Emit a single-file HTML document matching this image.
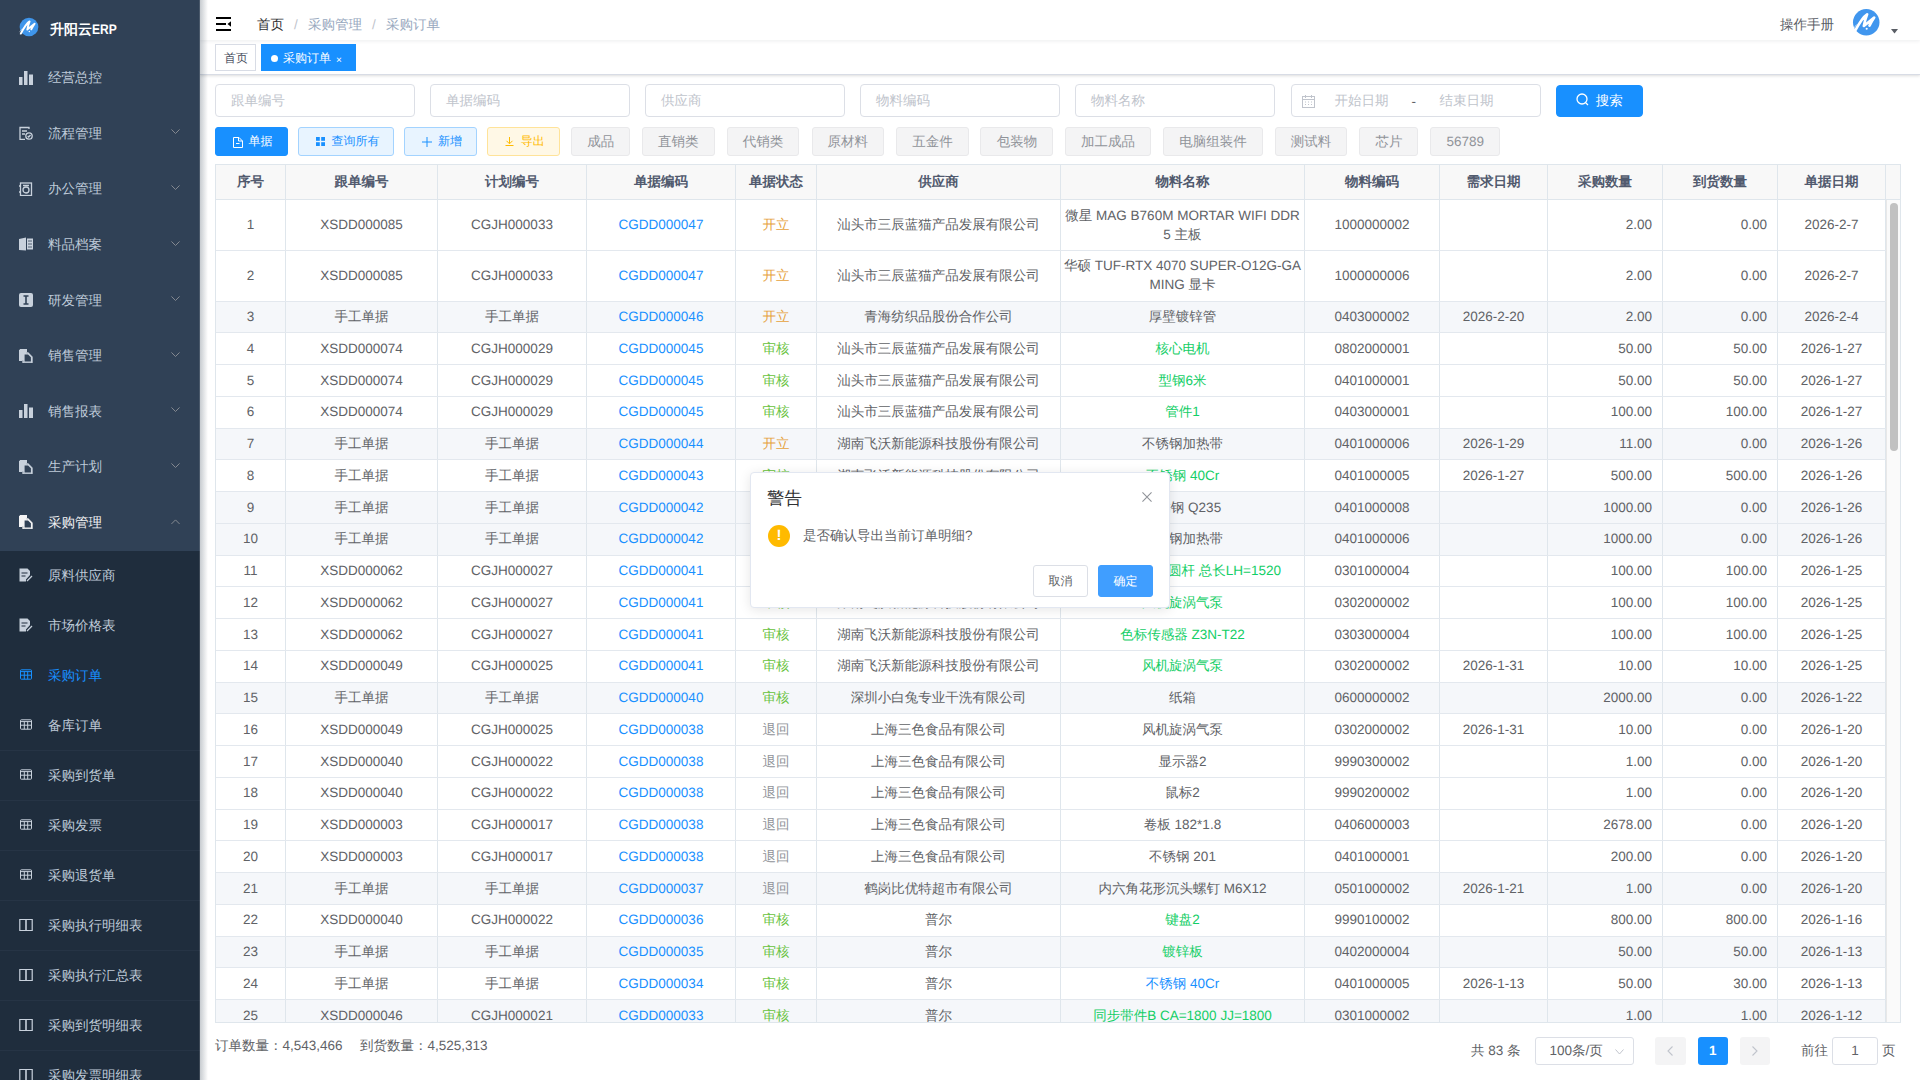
<!DOCTYPE html>
<html><head><meta charset="utf-8">
<style>
*{box-sizing:border-box;margin:0;padding:0}
html,body{width:1920px;height:1080px;overflow:hidden;background:#fff;font-family:"Liberation Sans",sans-serif;-webkit-font-smoothing:antialiased;text-rendering:geometricPrecision}
#side{position:absolute;left:0;top:0;width:200px;height:1080px;background:#304156;overflow:hidden;z-index:5}
#side .logo{position:absolute;left:19.25px;top:17.35px;width:20px;height:20px}
#side .brand{position:absolute;left:50px;top:19px;line-height:20px;font-size:14px;font-weight:bold;color:#fff;white-space:nowrap}
.mi{position:absolute;left:0;width:200px;height:55.6px;font-size:13.5px}
.mi .ic{position:absolute;left:19px;top:50%;margin-top:-7.2px;width:14px;height:14px}
.mi .ic svg,.si .ic svg{display:block}
.mi .mt,.si .mt{position:absolute;left:48px;top:50%;margin-top:-9.5px;line-height:20px;white-space:nowrap}
.mi .arr{position:absolute;left:170.5px;top:50%;margin-top:-4px;width:9px;height:5.4px}
#subm{position:absolute;left:0;top:551px;width:200px;height:560px;background:#1f2d3d}
.si{position:absolute;left:0;width:200px;height:50px;font-size:13.5px}
.si .ic{position:absolute;left:19px;top:50%;margin-top:-8.5px;width:14px;height:14px}
.si .mt{margin-top:-10.4px !important}
.si.ln{box-shadow:0 -1px 0 #263445}
#sideshadow{position:absolute;left:200px;top:0;width:8px;height:1080px;background:linear-gradient(to right,rgba(0,21,41,.22),rgba(0,21,41,0));z-index:4}

#nav{position:absolute;left:200px;top:0;width:1720px;height:40px;background:#fff;box-shadow:0 1px 4px rgba(0,21,41,.08);z-index:3}
#ham{position:absolute;left:16px;top:17px}
.bc{position:absolute;top:15px;line-height:20px;font-size:13.5px;white-space:nowrap}
#tags{position:absolute;left:200px;top:40px;width:1720px;height:35px;background:#fff;border-bottom:1px solid #d8dce5;box-shadow:0 1px 3px 0 rgba(0,0,0,.12),0 0 3px 0 rgba(0,0,0,.04);z-index:2}
.tag{position:absolute;top:4px;height:26.6px;line-height:26.5px;font-size:12px;border:1px solid #d8dce5;color:#495060;padding:0 8px;white-space:nowrap}
.tag.act{background:#1890ff;border-color:#1890ff;color:#fff}

.inp{position:absolute;top:84px;width:200px;height:32.5px;border:1px solid #dcdfe6;border-radius:4px;background:#fff}
.inp span{position:absolute;left:15px;top:0.5px;line-height:30.5px;font-size:13.5px;color:#c0c4cc;white-space:nowrap}
.btn{position:absolute;top:126.5px;height:29px;border-radius:3px;font-size:13.5px;line-height:28.5px;text-align:center;border:1px solid;white-space:nowrap}
.btn .bi{display:inline-block;vertical-align:-1px;margin-right:7px}
.btn .bi svg{display:block}
.b-primary{background:#1890ff;border-color:#1890ff;color:#fff}
.b-plain{background:#e8f4ff;border-color:#a3d3ff;color:#1890ff}
.b-warn{background:#fff8e6;border-color:#ffe399;color:#ffba00}
.b-info{background:#f4f4f5;border-color:#e9e9eb;color:#909399}

#tbl{position:absolute;left:215px;top:164px;width:1686px;height:859px;border:1px solid #dfe6ec;border-right:none;overflow:hidden}
#tbl .hd{position:absolute;left:0;top:0;width:1685px;height:35.2px;background:#f8f8f9;border-bottom:1px solid #dfe6ec;display:flex}
#tbl .hd .c{height:34.2px;line-height:33px;padding-bottom:1.5px;font-weight:bold;color:#515a6e;background:#f8f8f8}
#tbl .hd .gut{border-right:1px solid #dfe6ec;padding:0}
.c{flex:none;border-right:1px solid #dfe6ec;text-align:center;font-size:13.5px;color:#606266;display:flex;align-items:center;justify-content:center;padding:0 10px;line-height:19.1px;white-space:nowrap;overflow:hidden}
.c.r{justify-content:flex-end}
.row{display:flex;border-bottom:1px solid #e3e8ee;background:#fff}
.row .c{padding-bottom:1px}
.row.s{background:#f5f7fa}
#body{position:absolute;left:0;top:35.2px;width:1670px;height:824px;overflow:hidden}
#sb{position:absolute;left:1670px;top:35.2px;width:15px;height:824px;background:#fafafa;border-left:1px solid #e8e8e8;border-right:1px solid #dfe6ec}
#sb .th{position:absolute;left:3px;top:3px;width:8px;height:248px;border-radius:4px;background:#c1c1c1}
.lnk{color:#1890ff}
.st-o{color:#e6a23c}
.st-g{color:#67c23a}
.st-r{color:#909399}
.mg{color:#13ce66}
.mb{color:#1890ff}

.foot{position:absolute;top:1036px;line-height:20px;font-size:13.5px;color:#606266;white-space:nowrap}
.pg{position:absolute;top:1036.5px;height:28px;line-height:28px;font-size:13.5px;color:#606266;white-space:nowrap}
.pbox{position:absolute;top:1036.5px;height:28px;border-radius:3px}

#mb{position:absolute;left:750px;top:472px;width:419.5px;height:136px;background:#fff;border:1px solid #e2e7f1;border-radius:4px;box-shadow:0 2px 12px 0 rgba(0,0,0,.1);z-index:10}
#mb .tt{position:absolute;left:16px;top:13.5px;line-height:22px;font-size:17.5px;color:#303133}
#mb .x{position:absolute;left:390.5px;top:19px}
#mb .wi{position:absolute;left:17px;top:52px;width:22px;height:22px;border-radius:50%;background:#ffba00;color:#fff;text-align:center;font-weight:bold;font-size:15px;line-height:22px}
#mb .msg{position:absolute;left:52px;top:53px;line-height:20px;font-size:13.5px;color:#606266;white-space:nowrap}
#mb .bt{position:absolute;top:92px;width:55px;height:32px;border-radius:3px;font-size:12px;line-height:30px;text-align:center}
</style></head>
<body>
<div id="side">
  <svg class="logo" viewBox="0 0 20 20" overflow="visible"><circle cx="10" cy="10" r="9.35" fill="#3f95ea"/><path d="M1.8 16.6C4 12.5 7.2 6.5 10.6 4.4 9.6 7 8.8 10 8.3 12.6L15.6 6.7C14.2 8.8 13.1 10.8 12.3 12.3" fill="none" stroke="#fff" stroke-width="1.9" stroke-linecap="round" stroke-linejoin="round"/><circle cx="10.3" cy="14.6" r="0.75" fill="#fff"/><path d="M0.4 15.2L3.2 11.6M1.2 17.2L3 15" stroke="#fff" stroke-width="0.6" opacity=".7"/></svg>
  <div class="brand">升阳云<span style="display:inline-block;transform:scaleX(.86);transform-origin:0 50%">ERP</span></div>
  <div class="mi" style="top:50px;color:#bfcbd9"><span class="ic"><svg width="14" height="14" viewBox="0 0 14 14"><rect x="0" y="6" width="3.5" height="8" fill="#c8d1dc"/><rect x="5" y="0" width="3.5" height="14" fill="#c8d1dc"/><rect x="10" y="3.5" width="4" height="10.5" fill="#c8d1dc"/></svg></span><span class="mt">经营总控</span></div>
<div class="mi" style="top:105.6px;color:#bfcbd9"><span class="ic"><svg width="14" height="14" viewBox="0 0 14 14" fill="none" stroke="#c8d1dc" stroke-width="1.3"><path d="M10 3V1.5H1v12h5"/><path d="M3 5h5M3 8h3"/><circle cx="10" cy="10" r="3.2"/><path d="M8.7 10l1 1 1.8-2"/></svg></span><span class="mt">流程管理</span><svg class="arr" width="10" height="6" viewBox="0 0 10 6" fill="none" stroke="#909399" stroke-width="1"><path d="M0.5 0.5L5 5l4.5-4.5"/></svg></div>
<div class="mi" style="top:161.2px;color:#bfcbd9"><span class="ic"><svg width="14" height="14" viewBox="0 0 14 14" fill="none" stroke="#c8d1dc" stroke-width="1.3"><rect x="1.5" y="1" width="11" height="12.5"/><circle cx="7" cy="8" r="3"/><path d="M0 4h2M0 10h2M4 3.5h6"/></svg></span><span class="mt">办公管理</span><svg class="arr" width="10" height="6" viewBox="0 0 10 6" fill="none" stroke="#909399" stroke-width="1"><path d="M0.5 0.5L5 5l4.5-4.5"/></svg></div>
<div class="mi" style="top:216.79999999999998px;color:#bfcbd9"><span class="ic"><svg width="14" height="14" viewBox="0 0 14 14"><path d="M0 2l7-1.5v13L0 13z" fill="#c8d1dc"/><rect x="8" y="1.5" width="6" height="11" fill="#c8d1dc"/><path d="M9 4h4M9 7h4M9 10h4" stroke="#304156" stroke-width="0.8"/></svg></span><span class="mt">料品档案</span><svg class="arr" width="10" height="6" viewBox="0 0 10 6" fill="none" stroke="#909399" stroke-width="1"><path d="M0.5 0.5L5 5l4.5-4.5"/></svg></div>
<div class="mi" style="top:272.4px;color:#bfcbd9"><span class="ic"><svg width="14" height="14" viewBox="0 0 14 14"><rect x="0" y="0" width="14" height="14" rx="2" fill="#c8d1dc"/><path d="M4.5 3h5M4.5 11h5M7 3v8" stroke="#304156" stroke-width="1.6"/></svg></span><span class="mt">研发管理</span><svg class="arr" width="10" height="6" viewBox="0 0 10 6" fill="none" stroke="#909399" stroke-width="1"><path d="M0.5 0.5L5 5l4.5-4.5"/></svg></div>
<div class="mi" style="top:328.0px;color:#bfcbd9"><span class="ic"><svg width="14" height="14" viewBox="0 0 14 14"><path d="M0 1h8v2H3v9H0z" fill="#c8d1dc"/><path d="M4 4h5l4 4v6H4z" fill="none" stroke="#c8d1dc" stroke-width="1.3"/><path d="M1 0h7v1H1z" fill="#c8d1dc"/><rect x="0.5" y="0.5" width="7" height="11" fill="#c8d1dc"/><path d="M5 5h4.5l3 3v5H5z" fill="#304156" stroke="#c8d1dc" stroke-width="1.2"/></svg></span><span class="mt">销售管理</span><svg class="arr" width="10" height="6" viewBox="0 0 10 6" fill="none" stroke="#909399" stroke-width="1"><path d="M0.5 0.5L5 5l4.5-4.5"/></svg></div>
<div class="mi" style="top:383.6px;color:#bfcbd9"><span class="ic"><svg width="14" height="14" viewBox="0 0 14 14"><rect x="0" y="6" width="3.5" height="8" fill="#c8d1dc"/><rect x="5" y="0" width="3.5" height="14" fill="#c8d1dc"/><rect x="10" y="3.5" width="4" height="10.5" fill="#c8d1dc"/></svg></span><span class="mt">销售报表</span><svg class="arr" width="10" height="6" viewBox="0 0 10 6" fill="none" stroke="#909399" stroke-width="1"><path d="M0.5 0.5L5 5l4.5-4.5"/></svg></div>
<div class="mi" style="top:439.20000000000005px;color:#bfcbd9"><span class="ic"><svg width="14" height="14" viewBox="0 0 14 14"><path d="M0 1h8v2H3v9H0z" fill="#c8d1dc"/><path d="M4 4h5l4 4v6H4z" fill="none" stroke="#c8d1dc" stroke-width="1.3"/><path d="M1 0h7v1H1z" fill="#c8d1dc"/><rect x="0.5" y="0.5" width="7" height="11" fill="#c8d1dc"/><path d="M5 5h4.5l3 3v5H5z" fill="#304156" stroke="#c8d1dc" stroke-width="1.2"/></svg></span><span class="mt">生产计划</span><svg class="arr" width="10" height="6" viewBox="0 0 10 6" fill="none" stroke="#909399" stroke-width="1"><path d="M0.5 0.5L5 5l4.5-4.5"/></svg></div>
<div class="mi" style="top:494.80000000000007px;color:#f4f4f5"><span class="ic"><svg width="14" height="14" viewBox="0 0 14 14"><path d="M0 1h8v2H3v9H0z" fill="#f4f4f5"/><path d="M4 4h5l4 4v6H4z" fill="none" stroke="#f4f4f5" stroke-width="1.3"/><path d="M1 0h7v1H1z" fill="#f4f4f5"/><rect x="0.5" y="0.5" width="7" height="11" fill="#f4f4f5"/><path d="M5 5h4.5l3 3v5H5z" fill="#304156" stroke="#f4f4f5" stroke-width="1.2"/></svg></span><span class="mt">采购管理</span><svg class="arr" width="10" height="6" viewBox="0 0 10 6" fill="none" stroke="#909399" stroke-width="1"><path d="M0.5 5.5L5 1l4.5 4.5"/></svg></div>
  <div id="subm"></div>
  <div class="si" style="top:551px;color:#bfcbd9"><span class="ic"><svg width="14" height="14" viewBox="0 0 14 14"><path d="M0.5 0.5h8l2.5 2.5v4l-4 4.5v2H0.5z" fill="#c8d1dc"/><path d="M2.5 5h6M2.5 8h4" stroke="#1f2d3d" stroke-width="1.2"/><path d="M8 13l5-5" stroke="#c8d1dc" stroke-width="1.3"/></svg></span><span class="mt">原料供应商</span></div>
<div class="si" style="top:601px;color:#bfcbd9"><span class="ic"><svg width="14" height="14" viewBox="0 0 14 14"><path d="M0.5 0.5h8l2.5 2.5v4l-4 4.5v2H0.5z" fill="#c8d1dc"/><path d="M2.5 5h6M2.5 8h4" stroke="#1f2d3d" stroke-width="1.2"/><path d="M8 13l5-5" stroke="#c8d1dc" stroke-width="1.3"/></svg></span><span class="mt">市场价格表</span></div>
<div class="si" style="top:651px;color:#1890ff"><span class="ic"><svg width="14" height="14" viewBox="0 0 14 14" fill="none" stroke="#1890ff" stroke-width="1"><rect x="1.5" y="1.8" width="11" height="9.4" rx="0.8"/><path d="M1.5 3.6h11M1.5 7.2h11M5.3 3.6v7.6M8.7 3.6v7.6"/></svg></span><span class="mt">采购订单</span></div>
<div class="si" style="top:701px;color:#bfcbd9"><span class="ic"><svg width="14" height="14" viewBox="0 0 14 14" fill="none" stroke="#c8d1dc" stroke-width="1"><rect x="1.5" y="1.8" width="11" height="9.4" rx="0.8"/><path d="M1.5 3.6h11M1.5 7.2h11M5.3 3.6v7.6M8.7 3.6v7.6"/></svg></span><span class="mt">备库订单</span></div>
<div class="si ln" style="top:751px;color:#bfcbd9"><span class="ic"><svg width="14" height="14" viewBox="0 0 14 14" fill="none" stroke="#c8d1dc" stroke-width="1"><rect x="1.5" y="1.8" width="11" height="9.4" rx="0.8"/><path d="M1.5 3.6h11M1.5 7.2h11M5.3 3.6v7.6M8.7 3.6v7.6"/></svg></span><span class="mt">采购到货单</span></div>
<div class="si ln" style="top:801px;color:#bfcbd9"><span class="ic"><svg width="14" height="14" viewBox="0 0 14 14" fill="none" stroke="#c8d1dc" stroke-width="1"><rect x="1.5" y="1.8" width="11" height="9.4" rx="0.8"/><path d="M1.5 3.6h11M1.5 7.2h11M5.3 3.6v7.6M8.7 3.6v7.6"/></svg></span><span class="mt">采购发票</span></div>
<div class="si ln" style="top:851px;color:#bfcbd9"><span class="ic"><svg width="14" height="14" viewBox="0 0 14 14" fill="none" stroke="#c8d1dc" stroke-width="1"><rect x="1.5" y="1.8" width="11" height="9.4" rx="0.8"/><path d="M1.5 3.6h11M1.5 7.2h11M5.3 3.6v7.6M8.7 3.6v7.6"/></svg></span><span class="mt">采购退货单</span></div>
<div class="si ln" style="top:901px;color:#bfcbd9"><span class="ic"><svg width="14" height="14" viewBox="0 0 14 14" fill="none" stroke="#c8d1dc" stroke-width="1.2"><path d="M0.8 1.5h6v11h-6zM7.2 1.5h6v11h-6z"/></svg></span><span class="mt">采购执行明细表</span></div>
<div class="si ln" style="top:951px;color:#bfcbd9"><span class="ic"><svg width="14" height="14" viewBox="0 0 14 14" fill="none" stroke="#c8d1dc" stroke-width="1.2"><path d="M0.8 1.5h6v11h-6zM7.2 1.5h6v11h-6z"/></svg></span><span class="mt">采购执行汇总表</span></div>
<div class="si ln" style="top:1001px;color:#bfcbd9"><span class="ic"><svg width="14" height="14" viewBox="0 0 14 14" fill="none" stroke="#c8d1dc" stroke-width="1.2"><path d="M0.8 1.5h6v11h-6zM7.2 1.5h6v11h-6z"/></svg></span><span class="mt">采购到货明细表</span></div>
<div class="si ln" style="top:1051px;color:#bfcbd9"><span class="ic"><svg width="14" height="14" viewBox="0 0 14 14" fill="none" stroke="#c8d1dc" stroke-width="1.2"><path d="M0.8 1.5h6v11h-6zM7.2 1.5h6v11h-6z"/></svg></span><span class="mt">采购发票明细表</span></div>
</div>
<div id="sideshadow"></div><div style="position:absolute;left:199px;top:0;width:1px;height:1080px;background:rgba(255,255,255,.13);z-index:6"></div>

<div id="nav">
  <svg id="ham" width="16" height="14" viewBox="0 0 16 14"><path d="M0 1h15M0 7h10M0 13h15" stroke="#000" stroke-width="1.8"/><path d="M15 4.2v5.6L11.5 7z" fill="#000"/></svg>
  <div class="bc" style="left:57px;color:#303133">首页</div>
  <div class="bc" style="left:94px;color:#c0c4cc">/</div>
  <div class="bc" style="left:108px;color:#97a8be">采购管理</div>
  <div class="bc" style="left:172px;color:#c0c4cc">/</div>
  <div class="bc" style="left:186px;color:#97a8be">采购订单</div>
  <div class="bc" style="left:1580px;color:#5a5e66">操作手册</div>
  <svg style="position:absolute;left:1652.5px;top:8.7px" width="26.5" height="26.5" viewBox="0.65 0.65 18.7 18.7" overflow="visible"><circle cx="10" cy="10" r="9.35" fill="#4096ee"/><path d="M1.8 16.6C4 12.5 7.2 6.5 10.6 4.4 9.6 7 8.8 10 8.3 12.6L15.6 6.7C14.2 8.8 13.1 10.8 12.3 12.3" fill="none" stroke="#fff" stroke-width="1.9" stroke-linecap="round" stroke-linejoin="round"/><circle cx="10.3" cy="14.6" r="0.75" fill="#fff"/><path d="M0.4 15.2L3.2 11.6M1.2 17.2L3 15" stroke="#fff" stroke-width="0.6" opacity=".7"/></svg>
  <svg style="position:absolute;left:1691px;top:29px" width="7" height="4.5" viewBox="0 0 7 4.5"><path d="M0 0h7L3.5 4.5z" fill="#5a5e66"/></svg>
</div>

<div id="tags">
  <div class="tag" style="left:15px;width:40.5px">首页</div>
  <div class="tag act" style="left:61px;width:95px;padding-left:9px"><span style="display:inline-block;width:7px;height:7px;border-radius:50%;background:#fff;vertical-align:0.5px;margin-right:5px"></span>采购订单<span style="font-size:10px;margin-left:5px;vertical-align:-0.5px">×</span></div>
</div>

<div class="inp" style="left:215px"><span>跟单编号</span></div><div class="inp" style="left:430px"><span>单据编码</span></div><div class="inp" style="left:645px"><span>供应商</span></div><div class="inp" style="left:860px"><span>物料编码</span></div><div class="inp" style="left:1075px"><span>物料名称</span></div>
<div class="inp" style="left:1290.5px;width:250px">
  <svg style="position:absolute;left:10px;top:9.5px" width="13" height="13" viewBox="0 0 13 13" fill="none" stroke="#c0c4cc" stroke-width="1"><rect x="0.5" y="1.5" width="12" height="11"/><path d="M0.5 4.5h12M3.5 0v3M9.5 0v3"/><path d="M3 7h1M6 7h1M9 7h1M3 9.5h1M6 9.5h1M9 9.5h1" stroke-width="1"/></svg>
  <span style="left:43px">开始日期</span>
  <span style="left:120px;top:2px;color:#606266">-</span>
  <span style="left:148px">结束日期</span>
</div>
<div class="btn b-primary" style="left:1556px;top:84.5px;height:32px;width:86.5px;line-height:30px;font-size:13.5px;border-radius:4px"><span class="bi" style="margin-right:7px"><svg width="13" height="13" viewBox="0 0 13 13" fill="none" stroke="#fff" stroke-width="1.3"><circle cx="6" cy="6" r="5"/><path d="M9.6 9.6L12 12"/></svg></span><span>搜索</span></div>
<div class="btn b-primary" style="left:215px;width:73px"><span class="bi" style="position:absolute;left:17px;top:9px"><svg width="10" height="11" viewBox="0 0 10 11" fill="none" stroke="#fff" stroke-width="1"><path d="M0.5 0.5h5.5l3.5 3.5v6.5H0.5z"/><path d="M5.5 0.5v3.5h4M3 6.5h3.5"/></svg></span><span style="position:absolute;left:32.5px;top:0;font-size:12px;line-height:27px">单据</span></div>
<div class="btn b-plain" style="left:298.1px;width:95.6px"><span class="bi" style="position:absolute;left:17px;top:9.7px"><svg width="9" height="9" viewBox="0 0 9 9" fill="#1890ff"><rect x="0" y="0" width="3.8" height="3.8"/><rect x="5.2" y="0" width="3.8" height="3.8"/><rect x="0" y="5.2" width="3.8" height="3.8"/><rect x="5.2" y="5.2" width="3.8" height="3.8"/></svg></span><span style="position:absolute;left:32.5px;top:0;font-size:12px;line-height:27px">查询所有</span></div>
<div class="btn b-plain" style="left:404.4px;width:72.6px"><span class="bi" style="position:absolute;left:17px;top:9.7px"><svg width="10" height="10" viewBox="0 0 10 10" fill="none" stroke="#1890ff" stroke-width="1"><path d="M5 0v10M0 5h10"/></svg></span><span style="position:absolute;left:32.5px;top:0;font-size:12px;line-height:27px">新增</span></div>
<div class="btn b-warn" style="left:487.2px;width:73px"><span class="bi" style="position:absolute;left:17px;top:9.7px"><svg width="9" height="9" viewBox="0 0 9 9" fill="none" stroke="#ffba00" stroke-width="1"><path d="M4.5 0v6.5M1.5 3.8l3 3 3-3M0.5 8.5h8"/></svg></span><span style="position:absolute;left:32.5px;top:0;font-size:12px;line-height:27px">导出</span></div>
<div class="btn b-info" style="left:571.2px;width:59px"><span>成品</span></div>
<div class="btn b-info" style="left:642px;width:72.6px"><span>直销类</span></div>
<div class="btn b-info" style="left:726.6px;width:72.7px"><span>代销类</span></div>
<div class="btn b-info" style="left:811.6px;width:72.5px"><span>原材料</span></div>
<div class="btn b-info" style="left:896.1px;width:72.6px"><span>五金件</span></div>
<div class="btn b-info" style="left:980.4px;width:73px"><span>包装物</span></div>
<div class="btn b-info" style="left:1065px;width:86px"><span>加工成品</span></div>
<div class="btn b-info" style="left:1163.2px;width:99.5px"><span>电脑组装件</span></div>
<div class="btn b-info" style="left:1274.7px;width:72.6px"><span>测试料</span></div>
<div class="btn b-info" style="left:1359.4px;width:59px"><span>芯片</span></div>
<div class="btn b-info" style="left:1430.2px;width:70px"><span>56789</span></div>

<div id="tbl">
  <div class="hd"><div class="c" style="width:70px"><span>序号</span></div><div class="c" style="width:152px"><span>跟单编号</span></div><div class="c" style="width:149px"><span>计划编号</span></div><div class="c" style="width:149px"><span>单据编码</span></div><div class="c" style="width:81px"><span>单据状态</span></div><div class="c" style="width:244px"><span>供应商</span></div><div class="c" style="width:244px"><span>物料名称</span></div><div class="c" style="width:135px"><span>物料编码</span></div><div class="c" style="width:108px"><span>需求日期</span></div><div class="c" style="width:115px"><span>采购数量</span></div><div class="c" style="width:115px"><span>到货数量</span></div><div class="c" style="width:108px"><span>单据日期</span></div><div class="c gut" style="width:15px"></div></div>
  <div id="body">
  <div class="row" style="height:51px"><div class="c" style="width:70px">1</div><div class="c" style="width:152px">XSDD000085</div><div class="c" style="width:149px">CGJH000033</div><div class="c" style="width:149px"><span class="lnk">CGDD000047</span></div><div class="c" style="width:81px"><span class="st-o">开立</span></div><div class="c" style="width:244px">汕头市三辰蓝猫产品发展有限公司</div><div class="c" style="width:244px"><span>微星 MAG B760M MORTAR WIFI DDR<br>5 主板</span></div><div class="c" style="width:135px">1000000002</div><div class="c" style="width:108px"></div><div class="c r" style="width:115px">2.00</div><div class="c r" style="width:115px">0.00</div><div class="c" style="width:108px">2026-2-7</div></div>
<div class="row" style="height:50.5px"><div class="c" style="width:70px">2</div><div class="c" style="width:152px">XSDD000085</div><div class="c" style="width:149px">CGJH000033</div><div class="c" style="width:149px"><span class="lnk">CGDD000047</span></div><div class="c" style="width:81px"><span class="st-o">开立</span></div><div class="c" style="width:244px">汕头市三辰蓝猫产品发展有限公司</div><div class="c" style="width:244px"><span>华硕 TUF-RTX 4070 SUPER-O12G-GA<br>MING 显卡</span></div><div class="c" style="width:135px">1000000006</div><div class="c" style="width:108px"></div><div class="c r" style="width:115px">2.00</div><div class="c r" style="width:115px">0.00</div><div class="c" style="width:108px">2026-2-7</div></div>
<div class="row s" style="height:31.75px"><div class="c" style="width:70px">3</div><div class="c" style="width:152px">手工单据</div><div class="c" style="width:149px">手工单据</div><div class="c" style="width:149px"><span class="lnk">CGDD000046</span></div><div class="c" style="width:81px"><span class="st-o">开立</span></div><div class="c" style="width:244px">青海纺织品股份合作公司</div><div class="c" style="width:244px"><span>厚壁镀锌管</span></div><div class="c" style="width:135px">0403000002</div><div class="c" style="width:108px">2026-2-20</div><div class="c r" style="width:115px">2.00</div><div class="c r" style="width:115px">0.00</div><div class="c" style="width:108px">2026-2-4</div></div>
<div class="row" style="height:31.75px"><div class="c" style="width:70px">4</div><div class="c" style="width:152px">XSDD000074</div><div class="c" style="width:149px">CGJH000029</div><div class="c" style="width:149px"><span class="lnk">CGDD000045</span></div><div class="c" style="width:81px"><span class="st-g">审核</span></div><div class="c" style="width:244px">汕头市三辰蓝猫产品发展有限公司</div><div class="c" style="width:244px"><span class="mg">核心电机</span></div><div class="c" style="width:135px">0802000001</div><div class="c" style="width:108px"></div><div class="c r" style="width:115px">50.00</div><div class="c r" style="width:115px">50.00</div><div class="c" style="width:108px">2026-1-27</div></div>
<div class="row" style="height:31.75px"><div class="c" style="width:70px">5</div><div class="c" style="width:152px">XSDD000074</div><div class="c" style="width:149px">CGJH000029</div><div class="c" style="width:149px"><span class="lnk">CGDD000045</span></div><div class="c" style="width:81px"><span class="st-g">审核</span></div><div class="c" style="width:244px">汕头市三辰蓝猫产品发展有限公司</div><div class="c" style="width:244px"><span class="mg">型钢6米</span></div><div class="c" style="width:135px">0401000001</div><div class="c" style="width:108px"></div><div class="c r" style="width:115px">50.00</div><div class="c r" style="width:115px">50.00</div><div class="c" style="width:108px">2026-1-27</div></div>
<div class="row" style="height:31.75px"><div class="c" style="width:70px">6</div><div class="c" style="width:152px">XSDD000074</div><div class="c" style="width:149px">CGJH000029</div><div class="c" style="width:149px"><span class="lnk">CGDD000045</span></div><div class="c" style="width:81px"><span class="st-g">审核</span></div><div class="c" style="width:244px">汕头市三辰蓝猫产品发展有限公司</div><div class="c" style="width:244px"><span class="mg">管件1</span></div><div class="c" style="width:135px">0403000001</div><div class="c" style="width:108px"></div><div class="c r" style="width:115px">100.00</div><div class="c r" style="width:115px">100.00</div><div class="c" style="width:108px">2026-1-27</div></div>
<div class="row s" style="height:31.75px"><div class="c" style="width:70px">7</div><div class="c" style="width:152px">手工单据</div><div class="c" style="width:149px">手工单据</div><div class="c" style="width:149px"><span class="lnk">CGDD000044</span></div><div class="c" style="width:81px"><span class="st-o">开立</span></div><div class="c" style="width:244px">湖南飞沃新能源科技股份有限公司</div><div class="c" style="width:244px"><span>不锈钢加热带</span></div><div class="c" style="width:135px">0401000006</div><div class="c" style="width:108px">2026-1-29</div><div class="c r" style="width:115px">11.00</div><div class="c r" style="width:115px">0.00</div><div class="c" style="width:108px">2026-1-26</div></div>
<div class="row" style="height:31.75px"><div class="c" style="width:70px">8</div><div class="c" style="width:152px">手工单据</div><div class="c" style="width:149px">手工单据</div><div class="c" style="width:149px"><span class="lnk">CGDD000043</span></div><div class="c" style="width:81px"><span class="st-g">审核</span></div><div class="c" style="width:244px">湖南飞沃新能源科技股份有限公司</div><div class="c" style="width:244px"><span class="mg">不锈钢 40Cr</span></div><div class="c" style="width:135px">0401000005</div><div class="c" style="width:108px">2026-1-27</div><div class="c r" style="width:115px">500.00</div><div class="c r" style="width:115px">500.00</div><div class="c" style="width:108px">2026-1-26</div></div>
<div class="row s" style="height:31.75px"><div class="c" style="width:70px">9</div><div class="c" style="width:152px">手工单据</div><div class="c" style="width:149px">手工单据</div><div class="c" style="width:149px"><span class="lnk">CGDD000042</span></div><div class="c" style="width:81px"><span class="st-o">开立</span></div><div class="c" style="width:244px">湖南飞沃新能源科技股份有限公司</div><div class="c" style="width:244px"><span>不锈钢 Q235</span></div><div class="c" style="width:135px">0401000008</div><div class="c" style="width:108px"></div><div class="c r" style="width:115px">1000.00</div><div class="c r" style="width:115px">0.00</div><div class="c" style="width:108px">2026-1-26</div></div>
<div class="row s" style="height:31.75px"><div class="c" style="width:70px">10</div><div class="c" style="width:152px">手工单据</div><div class="c" style="width:149px">手工单据</div><div class="c" style="width:149px"><span class="lnk">CGDD000042</span></div><div class="c" style="width:81px"><span class="st-o">开立</span></div><div class="c" style="width:244px">湖南飞沃新能源科技股份有限公司</div><div class="c" style="width:244px"><span>不锈钢加热带</span></div><div class="c" style="width:135px">0401000006</div><div class="c" style="width:108px"></div><div class="c r" style="width:115px">1000.00</div><div class="c r" style="width:115px">0.00</div><div class="c" style="width:108px">2026-1-26</div></div>
<div class="row" style="height:31.75px"><div class="c" style="width:70px">11</div><div class="c" style="width:152px">XSDD000062</div><div class="c" style="width:149px">CGJH000027</div><div class="c" style="width:149px"><span class="lnk">CGDD000041</span></div><div class="c" style="width:81px"><span class="st-g">审核</span></div><div class="c" style="width:244px">湖南飞沃新能源科技股份有限公司</div><div class="c" style="width:244px"><span class="mg">双头螺柱 M20圆杆 总长LH=1520</span></div><div class="c" style="width:135px">0301000004</div><div class="c" style="width:108px"></div><div class="c r" style="width:115px">100.00</div><div class="c r" style="width:115px">100.00</div><div class="c" style="width:108px">2026-1-25</div></div>
<div class="row" style="height:31.75px"><div class="c" style="width:70px">12</div><div class="c" style="width:152px">XSDD000062</div><div class="c" style="width:149px">CGJH000027</div><div class="c" style="width:149px"><span class="lnk">CGDD000041</span></div><div class="c" style="width:81px"><span class="st-g">审核</span></div><div class="c" style="width:244px">湖南飞沃新能源科技股份有限公司</div><div class="c" style="width:244px"><span class="mg">风机旋涡气泵</span></div><div class="c" style="width:135px">0302000002</div><div class="c" style="width:108px"></div><div class="c r" style="width:115px">100.00</div><div class="c r" style="width:115px">100.00</div><div class="c" style="width:108px">2026-1-25</div></div>
<div class="row" style="height:31.75px"><div class="c" style="width:70px">13</div><div class="c" style="width:152px">XSDD000062</div><div class="c" style="width:149px">CGJH000027</div><div class="c" style="width:149px"><span class="lnk">CGDD000041</span></div><div class="c" style="width:81px"><span class="st-g">审核</span></div><div class="c" style="width:244px">湖南飞沃新能源科技股份有限公司</div><div class="c" style="width:244px"><span class="mg">色标传感器 Z3N-T22</span></div><div class="c" style="width:135px">0303000004</div><div class="c" style="width:108px"></div><div class="c r" style="width:115px">100.00</div><div class="c r" style="width:115px">100.00</div><div class="c" style="width:108px">2026-1-25</div></div>
<div class="row" style="height:31.75px"><div class="c" style="width:70px">14</div><div class="c" style="width:152px">XSDD000049</div><div class="c" style="width:149px">CGJH000025</div><div class="c" style="width:149px"><span class="lnk">CGDD000041</span></div><div class="c" style="width:81px"><span class="st-g">审核</span></div><div class="c" style="width:244px">湖南飞沃新能源科技股份有限公司</div><div class="c" style="width:244px"><span class="mg">风机旋涡气泵</span></div><div class="c" style="width:135px">0302000002</div><div class="c" style="width:108px">2026-1-31</div><div class="c r" style="width:115px">10.00</div><div class="c r" style="width:115px">10.00</div><div class="c" style="width:108px">2026-1-25</div></div>
<div class="row s" style="height:31.75px"><div class="c" style="width:70px">15</div><div class="c" style="width:152px">手工单据</div><div class="c" style="width:149px">手工单据</div><div class="c" style="width:149px"><span class="lnk">CGDD000040</span></div><div class="c" style="width:81px"><span class="st-g">审核</span></div><div class="c" style="width:244px">深圳小白兔专业干洗有限公司</div><div class="c" style="width:244px"><span>纸箱</span></div><div class="c" style="width:135px">0600000002</div><div class="c" style="width:108px"></div><div class="c r" style="width:115px">2000.00</div><div class="c r" style="width:115px">0.00</div><div class="c" style="width:108px">2026-1-22</div></div>
<div class="row" style="height:31.75px"><div class="c" style="width:70px">16</div><div class="c" style="width:152px">XSDD000049</div><div class="c" style="width:149px">CGJH000025</div><div class="c" style="width:149px"><span class="lnk">CGDD000038</span></div><div class="c" style="width:81px"><span class="st-r">退回</span></div><div class="c" style="width:244px">上海三色食品有限公司</div><div class="c" style="width:244px"><span>风机旋涡气泵</span></div><div class="c" style="width:135px">0302000002</div><div class="c" style="width:108px">2026-1-31</div><div class="c r" style="width:115px">10.00</div><div class="c r" style="width:115px">0.00</div><div class="c" style="width:108px">2026-1-20</div></div>
<div class="row" style="height:31.75px"><div class="c" style="width:70px">17</div><div class="c" style="width:152px">XSDD000040</div><div class="c" style="width:149px">CGJH000022</div><div class="c" style="width:149px"><span class="lnk">CGDD000038</span></div><div class="c" style="width:81px"><span class="st-r">退回</span></div><div class="c" style="width:244px">上海三色食品有限公司</div><div class="c" style="width:244px"><span>显示器2</span></div><div class="c" style="width:135px">9990300002</div><div class="c" style="width:108px"></div><div class="c r" style="width:115px">1.00</div><div class="c r" style="width:115px">0.00</div><div class="c" style="width:108px">2026-1-20</div></div>
<div class="row" style="height:31.75px"><div class="c" style="width:70px">18</div><div class="c" style="width:152px">XSDD000040</div><div class="c" style="width:149px">CGJH000022</div><div class="c" style="width:149px"><span class="lnk">CGDD000038</span></div><div class="c" style="width:81px"><span class="st-r">退回</span></div><div class="c" style="width:244px">上海三色食品有限公司</div><div class="c" style="width:244px"><span>鼠标2</span></div><div class="c" style="width:135px">9990200002</div><div class="c" style="width:108px"></div><div class="c r" style="width:115px">1.00</div><div class="c r" style="width:115px">0.00</div><div class="c" style="width:108px">2026-1-20</div></div>
<div class="row" style="height:31.75px"><div class="c" style="width:70px">19</div><div class="c" style="width:152px">XSDD000003</div><div class="c" style="width:149px">CGJH000017</div><div class="c" style="width:149px"><span class="lnk">CGDD000038</span></div><div class="c" style="width:81px"><span class="st-r">退回</span></div><div class="c" style="width:244px">上海三色食品有限公司</div><div class="c" style="width:244px"><span>卷板 182*1.8</span></div><div class="c" style="width:135px">0406000003</div><div class="c" style="width:108px"></div><div class="c r" style="width:115px">2678.00</div><div class="c r" style="width:115px">0.00</div><div class="c" style="width:108px">2026-1-20</div></div>
<div class="row" style="height:31.75px"><div class="c" style="width:70px">20</div><div class="c" style="width:152px">XSDD000003</div><div class="c" style="width:149px">CGJH000017</div><div class="c" style="width:149px"><span class="lnk">CGDD000038</span></div><div class="c" style="width:81px"><span class="st-r">退回</span></div><div class="c" style="width:244px">上海三色食品有限公司</div><div class="c" style="width:244px"><span>不锈钢 201</span></div><div class="c" style="width:135px">0401000001</div><div class="c" style="width:108px"></div><div class="c r" style="width:115px">200.00</div><div class="c r" style="width:115px">0.00</div><div class="c" style="width:108px">2026-1-20</div></div>
<div class="row s" style="height:31.75px"><div class="c" style="width:70px">21</div><div class="c" style="width:152px">手工单据</div><div class="c" style="width:149px">手工单据</div><div class="c" style="width:149px"><span class="lnk">CGDD000037</span></div><div class="c" style="width:81px"><span class="st-r">退回</span></div><div class="c" style="width:244px">鹤岗比优特超市有限公司</div><div class="c" style="width:244px"><span>内六角花形沉头螺钉 M6X12</span></div><div class="c" style="width:135px">0501000002</div><div class="c" style="width:108px">2026-1-21</div><div class="c r" style="width:115px">1.00</div><div class="c r" style="width:115px">0.00</div><div class="c" style="width:108px">2026-1-20</div></div>
<div class="row" style="height:31.75px"><div class="c" style="width:70px">22</div><div class="c" style="width:152px">XSDD000040</div><div class="c" style="width:149px">CGJH000022</div><div class="c" style="width:149px"><span class="lnk">CGDD000036</span></div><div class="c" style="width:81px"><span class="st-g">审核</span></div><div class="c" style="width:244px">普尔</div><div class="c" style="width:244px"><span class="mg">键盘2</span></div><div class="c" style="width:135px">9990100002</div><div class="c" style="width:108px"></div><div class="c r" style="width:115px">800.00</div><div class="c r" style="width:115px">800.00</div><div class="c" style="width:108px">2026-1-16</div></div>
<div class="row s" style="height:31.75px"><div class="c" style="width:70px">23</div><div class="c" style="width:152px">手工单据</div><div class="c" style="width:149px">手工单据</div><div class="c" style="width:149px"><span class="lnk">CGDD000035</span></div><div class="c" style="width:81px"><span class="st-g">审核</span></div><div class="c" style="width:244px">普尔</div><div class="c" style="width:244px"><span class="mg">镀锌板</span></div><div class="c" style="width:135px">0402000004</div><div class="c" style="width:108px"></div><div class="c r" style="width:115px">50.00</div><div class="c r" style="width:115px">50.00</div><div class="c" style="width:108px">2026-1-13</div></div>
<div class="row" style="height:31.75px"><div class="c" style="width:70px">24</div><div class="c" style="width:152px">手工单据</div><div class="c" style="width:149px">手工单据</div><div class="c" style="width:149px"><span class="lnk">CGDD000034</span></div><div class="c" style="width:81px"><span class="st-g">审核</span></div><div class="c" style="width:244px">普尔</div><div class="c" style="width:244px"><span class="mb">不锈钢 40Cr</span></div><div class="c" style="width:135px">0401000005</div><div class="c" style="width:108px">2026-1-13</div><div class="c r" style="width:115px">50.00</div><div class="c r" style="width:115px">30.00</div><div class="c" style="width:108px">2026-1-13</div></div>
<div class="row s" style="height:31.75px"><div class="c" style="width:70px">25</div><div class="c" style="width:152px">XSDD000046</div><div class="c" style="width:149px">CGJH000021</div><div class="c" style="width:149px"><span class="lnk">CGDD000033</span></div><div class="c" style="width:81px"><span class="st-g">审核</span></div><div class="c" style="width:244px">普尔</div><div class="c" style="width:244px"><span class="mg">同步带件B CA=1800 JJ=1800</span></div><div class="c" style="width:135px">0301000002</div><div class="c" style="width:108px"></div><div class="c r" style="width:115px">1.00</div><div class="c r" style="width:115px">1.00</div><div class="c" style="width:108px">2026-1-12</div></div>
  </div>
  <div id="sb"><div class="th"></div></div>
</div>

<div class="foot" style="left:215px">订单数量：4,543,466</div>
<div class="foot" style="left:360px">到货数量：4,525,313</div>

<div class="pg" style="left:1471px">共 83 条</div>
<div class="pbox" style="left:1534.5px;width:99px;border:1px solid #dcdfe6;background:#fff"><span style="position:absolute;left:14px;top:0;line-height:26px;font-size:13.5px;color:#606266">100条/页</span><svg style="position:absolute;left:79px;top:11px" width="9" height="6" viewBox="0 0 9 6" fill="none" stroke="#c0c4cc" stroke-width="1"><path d="M0.5 0.5L4.5 5 8.5 0.5"/></svg></div>
<div class="pbox" style="left:1655px;width:31px;background:#f4f4f5"><svg style="position:absolute;left:12px;top:9px" width="6" height="10" viewBox="0 0 6 10" fill="none" stroke="#c0c4cc" stroke-width="1.1"><path d="M5.5 0.5L1 5l4.5 4.5"/></svg></div>
<div class="pbox" style="left:1697.5px;width:30.5px;background:#1890ff;color:#fff;text-align:center;line-height:28px;font-size:13.5px;font-weight:bold">1</div>
<div class="pbox" style="left:1740px;width:30px;background:#f4f4f5"><svg style="position:absolute;left:12px;top:9px" width="6" height="10" viewBox="0 0 6 10" fill="none" stroke="#c0c4cc" stroke-width="1.1"><path d="M0.5 0.5L5 5 0.5 9.5"/></svg></div>
<div class="pg" style="left:1801px">前往</div>
<div class="pbox" style="left:1832px;width:46px;border:1px solid #dcdfe6;background:#fff;text-align:center;line-height:26px;font-size:13.5px;color:#606266">1</div>
<div class="pg" style="left:1882px">页</div>

<div id="mb">
  <div class="tt">警告</div>
  <svg class="x" width="10" height="10" viewBox="0 0 11 11" fill="none" stroke="#909399" stroke-width="1.2"><path d="M0.5 0.5l10 10M10.5 0.5l-10 10"/></svg>
  <div class="wi">!</div>
  <div class="msg">是否确认导出当前订单明细?</div>
  <div class="bt" style="left:282px;border:1px solid #dcdfe6;color:#606266;background:#fff">取消</div>
  <div class="bt" style="left:347px;background:#409eff;border:1px solid #409eff;color:#fff">确定</div>
</div>
</body></html>
